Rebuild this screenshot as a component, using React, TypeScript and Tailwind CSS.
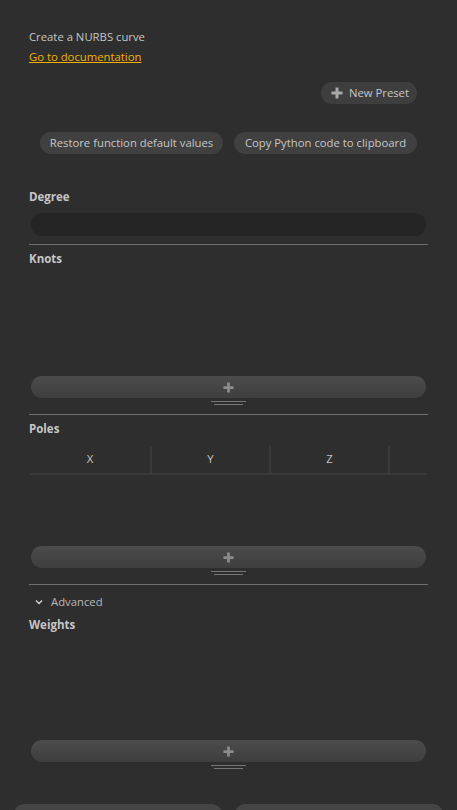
import React from "react";

const font = { fontFamily: '"Open Sans", "Noto Sans", sans-serif' };

const PlusIcon = ({ className }: { className?: string }) => (
  <svg viewBox="0 0 12 12" className={className}>
    <path d="M4.5 0.5h3v4h4v3h-4v4h-3v-4h-4v-3h4z" fill="currentColor" />
  </svg>
);

const Separator = () => <div className="h-px bg-[#6f6f6f]" />;

const AddRow = () => (
  <div className="flex flex-col items-center">
    <button className="flex h-[22px] w-full items-center justify-center rounded-full bg-gradient-to-b from-[#4c4c4c] to-[#3e3e3e] text-[#8c8c8c]">
      <PlusIcon className="h-[11px] w-[11px]" />
    </button>
    <div className="mt-[3px] h-px w-[35px] bg-[#777]" />
    <div className="mt-[2px] h-px w-[29px] bg-[#777]" />
  </div>
);

const Label = ({ children }: { children: React.ReactNode }) => (
  <div className="text-[11.5px] font-bold leading-4 text-[#c6c6c6]">{children}</div>
);

export default function App() {
  return (
    <div className="h-[810px] w-full overflow-hidden bg-[#2e2e2e] px-[29px] pt-[29px] text-[11.3px] text-[#c6c6c6]" style={font}>
      <div className="leading-4">Create a NURBS curve</div>
      <div className="mt-[4px] leading-4">
        <a className="text-[#f2b200] underline">Go to documentation</a>
      </div>

      <div className="mt-[17px] flex justify-end pr-[11px]">
        <button className="flex h-[22px] items-center gap-[6px] rounded-full bg-[#3e3e3e] pl-[10px] pr-[8px] text-[#c6c6c6]">
          <PlusIcon className="h-[12px] w-[12px] text-[#a8a8a8]" />
          New Preset
        </button>
      </div>

      <div className="mt-[28px] flex justify-end gap-[11px] pr-[11px]">
        <button className="h-[22px] w-[183px] rounded-full bg-[#404040]">Restore function default values</button>
        <button className="h-[22px] w-[183px] rounded-full bg-[#404040]">Copy Python code to clipboard</button>
      </div>

      <div className="mt-[35px]">
        <Label>Degree</Label>
      </div>
      <div className="mx-[2px] mt-[8px] h-[23px] rounded-full bg-[#252525]" />
      <div className="mt-[8px]">
        <Separator />
      </div>

      <div className="mt-[6px]">
        <Label>Knots</Label>
      </div>
      <div className="mx-[2px] mt-[109px]">
        <AddRow />
      </div>
      <div className="mt-[9px]">
        <Separator />
      </div>

      <div className="mt-[6px]">
        <Label>Poles</Label>
      </div>
      <div className="ml-[1px] mr-px mt-[9px] grid h-[29px] grid-cols-[122px_119px_119px_1fr] border-b-2 border-[#3a3a3a]">
        <div className="flex items-center justify-center border-r-2 border-[#3a3a3a]">X</div>
        <div className="flex items-center justify-center border-r-2 border-[#3a3a3a]">Y</div>
        <div className="flex items-center justify-center border-r-2 border-[#3a3a3a]">Z</div>
        <div />
      </div>
      <div className="mx-[2px] mt-[71px]">
        <AddRow />
      </div>
      <div className="mt-[9px]">
        <Separator />
      </div>

      <div className="mt-[9px] flex items-center leading-4">
        <svg viewBox="0 0 10 10" className="ml-[5px] h-[10px] w-[10px] text-[#d0d0d0]">
          <path d="M2 3.5l3 3 3-3" fill="none" stroke="currentColor" strokeWidth="1.5" />
        </svg>
        <span className="ml-[7px] text-[#b8b8b8]">Advanced</span>
      </div>
      <div className="mt-[7px]">
        <Label>Weights</Label>
      </div>
      <div className="mx-[2px] mt-[107px]">
        <AddRow />
      </div>

      <div className="-mx-[15px] mt-[35px] flex gap-[13px]">
        <button className="h-[26px] flex-1 rounded-t-[10px] bg-[#454545]" />
        <button className="h-[26px] flex-1 rounded-t-[10px] bg-[#454545]" />
      </div>
    </div>
  );
}
